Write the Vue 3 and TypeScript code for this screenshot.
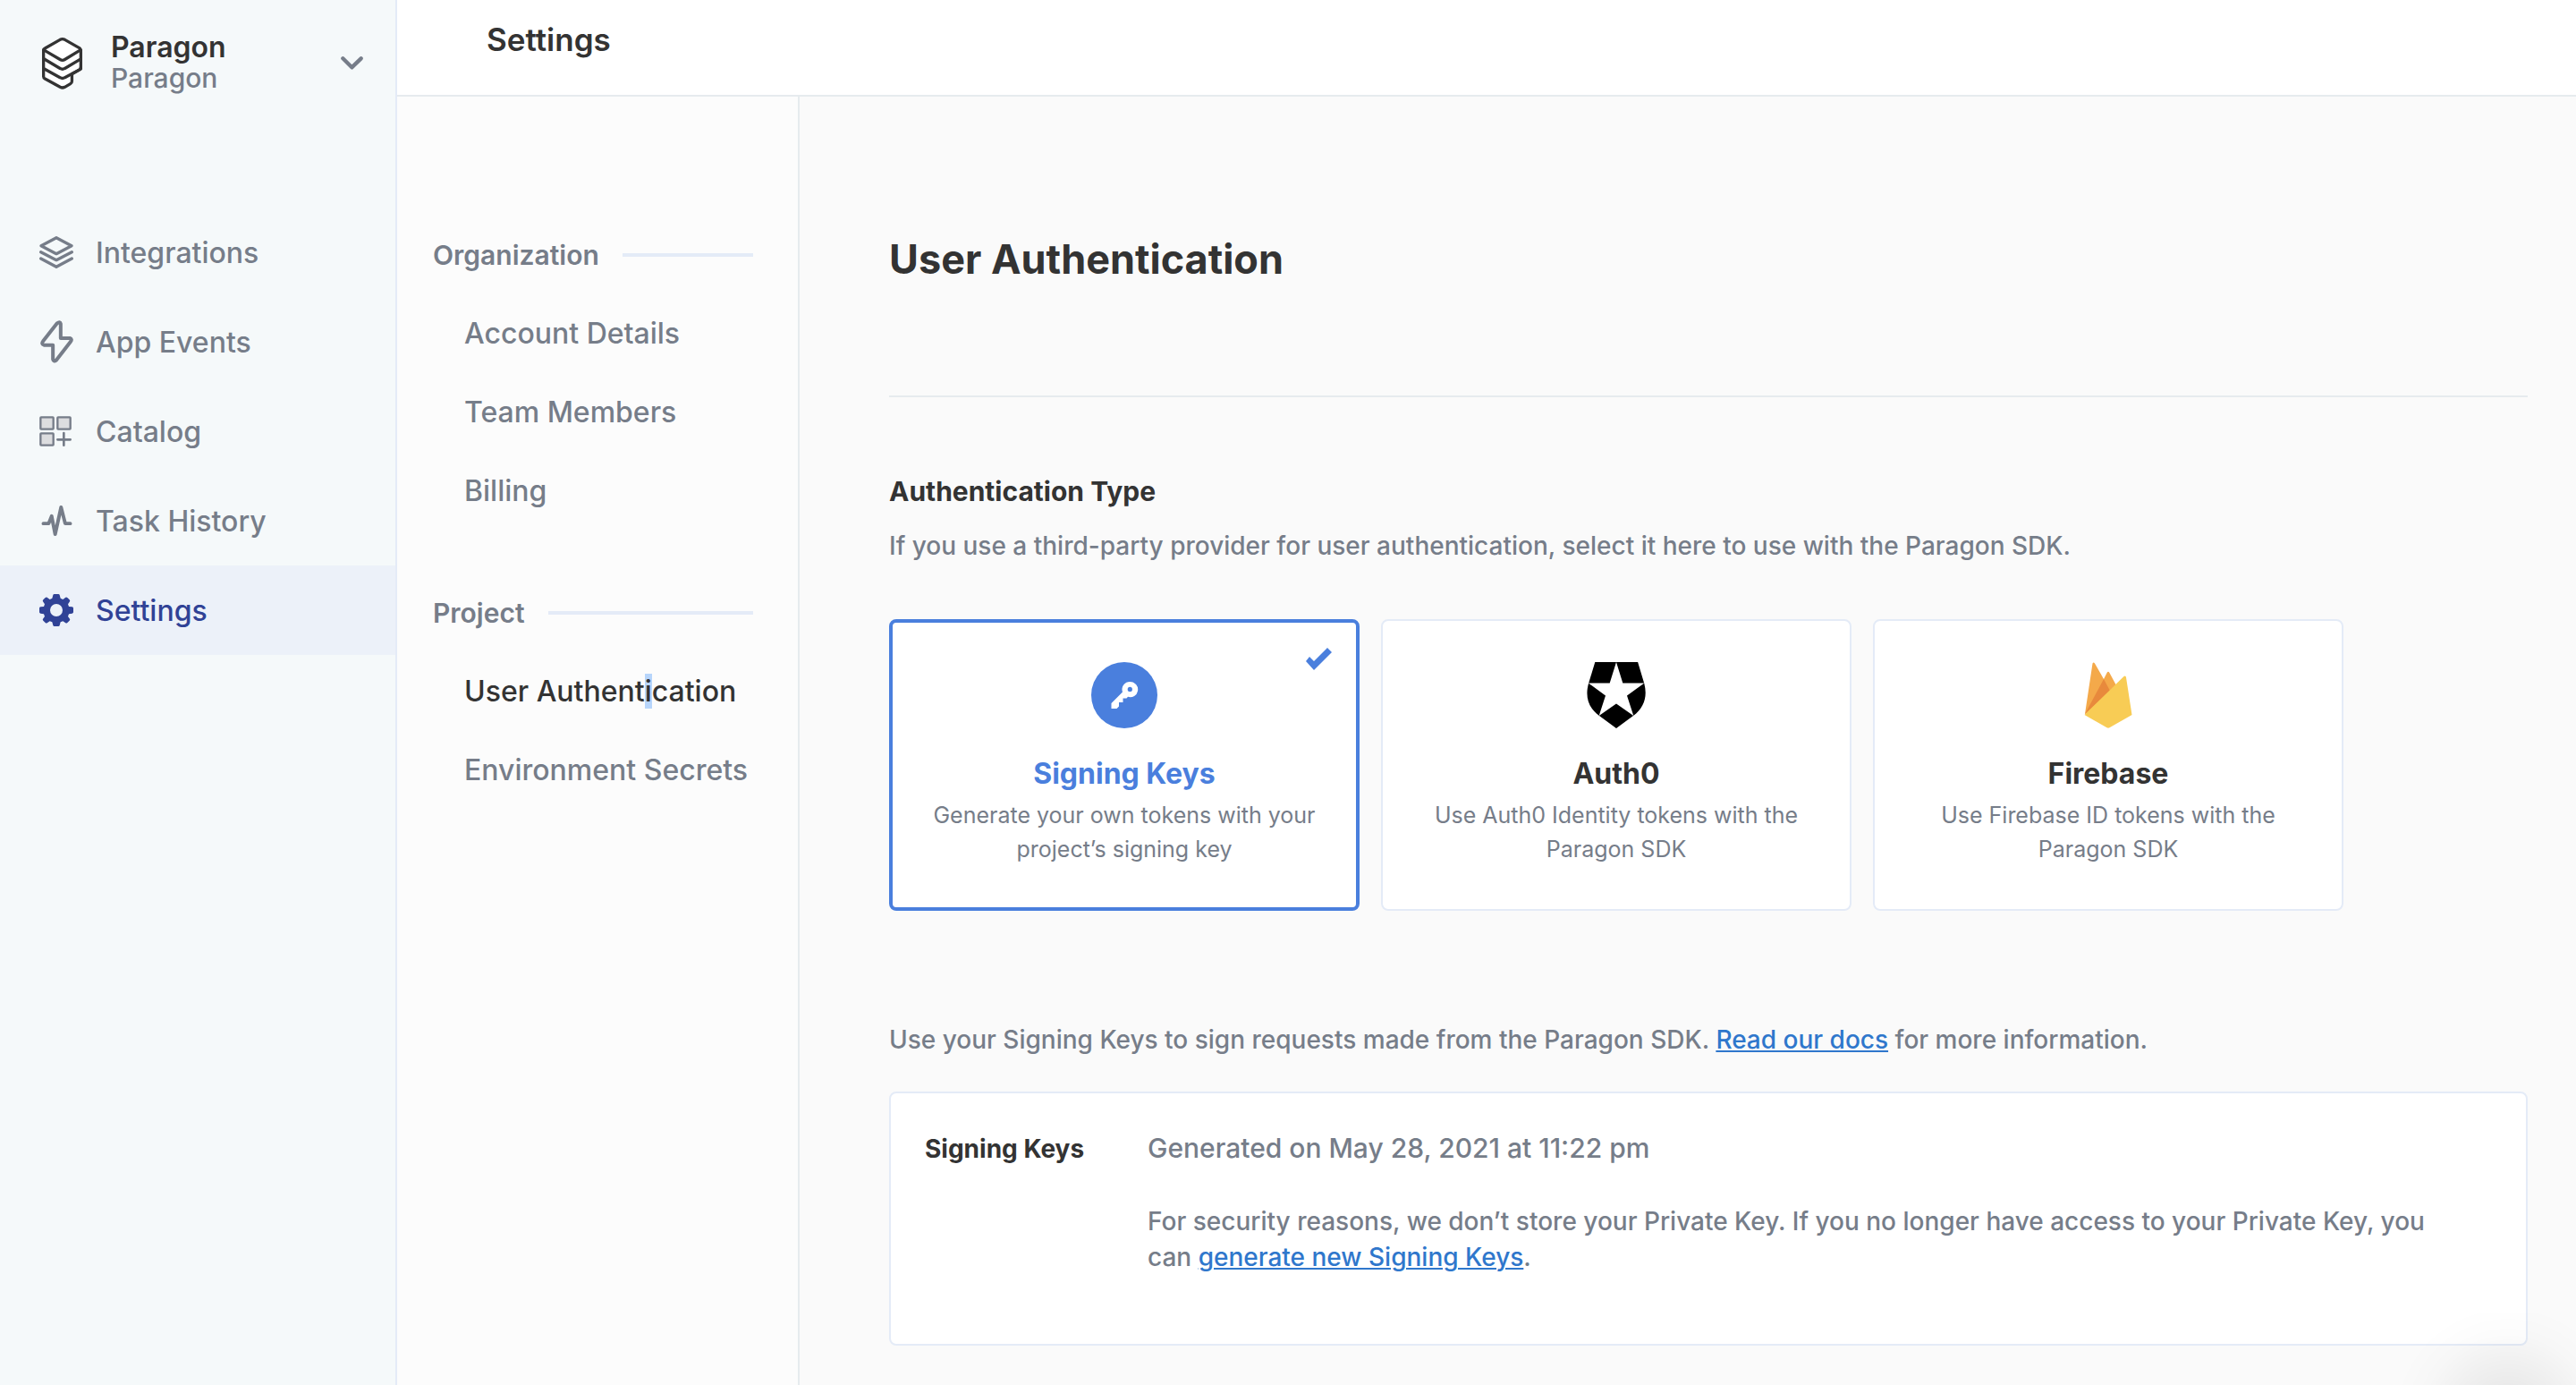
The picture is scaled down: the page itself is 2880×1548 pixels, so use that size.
<script setup lang="ts">
import { ref } from 'vue'

type NavIcon = 'layers' | 'bolt' | 'grid' | 'pulse' | 'gear'

interface NavItem {
  label: string
  icon: NavIcon
}

interface SettingsGroup {
  title: string
  items: string[]
}

interface AuthOption {
  id: 'keys' | 'auth0' | 'firebase'
  title: string
  description: string
}

const navItems: NavItem[] = [
  { label: 'Integrations', icon: 'layers' },
  { label: 'App Events', icon: 'bolt' },
  { label: 'Catalog', icon: 'grid' },
  { label: 'Task History', icon: 'pulse' },
  { label: 'Settings', icon: 'gear' },
]

const groups: SettingsGroup[] = [
  { title: 'Organization', items: ['Account Details', 'Team Members', 'Billing'] },
  { title: 'Project', items: ['User Authentication', 'Environment Secrets'] },
]

const authOptions: AuthOption[] = [
  { id: 'keys', title: 'Signing Keys', description: 'Generate your own tokens with your project’s signing key' },
  { id: 'auth0', title: 'Auth0', description: 'Use Auth0 Identity tokens with the Paragon SDK' },
  { id: 'firebase', title: 'Firebase', description: 'Use Firebase ID tokens with the Paragon SDK' },
]

const activeNav = ref('Settings')
const activePage = ref('User Authentication')
const authType = ref<AuthOption['id']>('keys')
</script>

<template>
  <div class="app">
    <aside class="sidebar">
      <button class="switcher" type="button">
        <svg class="logo" viewBox="0 0 142 178" fill="#fff" stroke="#333" stroke-width="10" stroke-linejoin="round" stroke-linecap="round">
          <path d="M8 44V134Q8 139 13 142L64 170Q72 174 80 170L99 159Q104 156 104 150V126L134 109V44Z" />
          <path d="M8 74L64 107Q72 112 80 107L134 75" fill="none" />
          <path d="M8 107L64 138Q72 143 80 138L128 112Q134 109 134 103" fill="none" />
          <path d="M13 39L64 10Q72 6 80 10L129 38Q135 43 129 47L80 77Q72 82 64 77L13 47Q5 43 13 39Z" />
        </svg>
        <span class="switcher-text">
          <span class="org-name">Paragon</span>
          <span class="project-name">Paragon</span>
        </span>
        <svg class="chevron" viewBox="0 0 75 45" fill="none" stroke="#767d89" stroke-width="13" stroke-linecap="round" stroke-linejoin="round">
          <path d="M7 7L37 37L68 7" />
        </svg>
      </button>

      <nav class="main-nav">
        <a
          v-for="item in navItems"
          :key="item.label"
          href="#"
          class="nav-link"
          :class="{ active: item.label === activeNav }"
          @click.prevent="activeNav = item.label"
        >
          <span class="nav-icon">
            <svg v-if="item.icon === 'layers'" width="38" height="36" viewBox="0 0 114 108" fill="none" stroke="currentColor" stroke-width="10" stroke-linejoin="round" stroke-linecap="round">
              <path d="M57 5L108 32L57 59L6 32Z" />
              <path d="M5 53L57 80L109 53" />
              <path d="M5 75L57 103L109 75" />
            </svg>
            <svg v-else-if="item.icon === 'bolt'" width="37" height="48" viewBox="0 0 110 144" fill="none" stroke="currentColor" stroke-width="12" stroke-linejoin="round">
              <path d="M56 10Q66 2 68 12V60H99Q108 63 101 72L54 133Q44 141 42 131V83H12Q2 80 9 70Z" />
            </svg>
            <svg v-else-if="item.icon === 'grid'" class="icon-grid" width="36" height="34" viewBox="0 0 108 102" fill="#dcdddf" stroke="currentColor" stroke-width="7">
              <rect x="4" y="4" width="43" height="40" rx="2" />
              <rect x="61" y="4" width="43" height="40" rx="2" />
              <rect x="4" y="58" width="43" height="40" rx="2" />
              <path d="M82 57V98M61 79H104" stroke-width="8" stroke-linecap="round" />
            </svg>
            <svg v-else-if="item.icon === 'pulse'" width="35" height="34" viewBox="0 0 103 103" fill="none" stroke="currentColor" stroke-width="12" stroke-linejoin="round" stroke-linecap="round">
              <path d="M6 61H24L34 36L46 97L66 6L80 61H97" />
            </svg>
            <svg v-else width="38" height="36" viewBox="0 0 114 108" fill="currentColor">
              <path
                fill-rule="evenodd"
                d="M46 3Q47 0 50 0H64Q67 0 68 3L71 14L79 18L88 11Q91 9 94 12L101 19Q104 22 102 25L96 34L99 42L110 43Q114 44 114 47V61Q114 64 110 65L99 67L96 75L102 83Q104 86 101 89L94 96Q91 99 88 97L79 91L71 94L68 105Q67 108 64 108H50Q47 108 46 105L43 94L35 91L26 97Q23 99 20 96L13 89Q10 86 12 83L18 75L15 67L4 65Q0 64 0 61V47Q0 44 4 43L15 42L18 34L12 25Q10 22 13 19L20 12Q23 9 26 11L35 18L43 14ZM57 33A21 21 0 1 0 57 75A21 21 0 1 0 57 33Z"
              />
            </svg>
          </span>
          {{ item.label }}
        </a>
      </nav>
    </aside>

    <div class="workspace">
      <header class="topbar">
        <h1 class="topbar-title">Settings</h1>
      </header>

      <div class="body">
        <nav class="settings-nav">
          <section v-for="group in groups" :key="group.title" class="group">
            <h2 class="group-title">{{ group.title }}</h2>
            <a
              v-for="page in group.items"
              :key="page"
              href="#"
              class="page-link"
              :class="{ active: page === activePage }"
              @click.prevent="activePage = page"
            >
              <template v-if="page === 'User Authentication'">User Authent<mark>i</mark>cation</template>
              <template v-else>{{ page }}</template>
            </a>
          </section>
        </nav>

        <main class="content">
          <h2 class="page-title">User Authentication</h2>
          <hr class="divider" />

          <h3 id="auth-type" class="section-title">Authentication Type</h3>
          <p class="copy">If you use a third-party provider for user authentication, select it here to use with the Paragon SDK.</p>

          <div class="cards" role="radiogroup" aria-labelledby="auth-type">
            <label
              v-for="option in authOptions"
              :key="option.id"
              class="card"
              :class="{ selected: option.id === authType }"
              :for="`auth-${option.id}`"
            >
              <input :id="`auth-${option.id}`" v-model="authType" class="card-input" type="radio" name="auth-type" :value="option.id" />
              <svg v-if="option.id === authType" class="card-check" viewBox="0 0 29 25" fill="#4a7fdd">
                <path d="M0 15L4 10L9 15L24 0L29 5L9 25Z" />
              </svg>

              <svg v-if="option.id === 'keys'" class="card-icon" viewBox="0 0 74 74">
                <circle cx="37" cy="37" r="37" fill="#4a7fdd" />
                <path
                  fill="#fff"
                  fill-rule="evenodd"
                  d="M43.500 22A8.600 8.600 0 1 1 41 38.800L39.500 40.500H35.500V45H31V49.500L28.500 52H22.500V46L35 33.500A8.600 8.600 0 0 1 43.500 22ZM43.300 27.800A2.600 2.600 0 1 0 43.300 33A2.600 2.600 0 1 0 43.300 27.800Z"
                />
              </svg>
              <svg v-else-if="option.id === 'auth0'" class="card-icon" viewBox="0 0 66 74">
                <path d="M9.300 0H57.100L64.300 24C68 38 64.500 51 52 60L33 74L14 60C1.500 51 -2 38 2 24Z" fill="#000" />
                <path d="M33 0L40.300 23.400H64.300L45 37.400L52.300 60L33 46.400L13.700 60L21 37.400L1.700 23.400H25.700Z" fill="#fff" />
              </svg>
              <svg v-else class="card-icon" viewBox="0 0 54 74">
                <path d="M1 58L9.500 1.500Q10.500 -0.500 12 1.500L22 19L25.700 11.800Q27 9.800 28.300 11.800L36 26L20 52Z" fill="#f4a94a" />
                <path d="M1 58L22 19L29 32Z" fill="#e8893c" />
                <path d="M0.500 59L44.500 16Q46.500 14.500 47 17L53.500 59L28.500 73.300Q27 74 25.500 73.300Z" fill="#f8cc55" />
              </svg>

              <span class="card-title">{{ option.title }}</span>
              <span class="card-text">{{ option.description }}</span>
            </label>
          </div>

          <p class="copy note">
            Use your Signing Keys to sign requests made from the Paragon SDK. <a href="#" class="link">Read our docs</a> for more information.
          </p>

          <section class="panel">
            <h3 class="panel-title">Signing Keys</h3>
            <div class="panel-body">
              <p class="generated">Generated on May 28, 2021 at 11:22 pm</p>
              <p class="copy">
                For security reasons, we don’t store your Private Key. If you no longer have access to your Private Key, you can
                <a href="#" class="link">generate new Signing Keys</a>.
              </p>
            </div>
          </section>
        </main>
      </div>
    </div>

    <div class="launcher-shadow" aria-hidden="true"></div>
  </div>
</template>

<style>
body {
  margin: 0;
  background: #fafafa;
}
</style>

<style scoped>
.app {
  display: flex;
  min-height: 100vh;
  font-family: Inter, 'Liberation Sans', sans-serif;
  font-weight: 500;
  color: #767d89;
}

h1,
h2,
h3,
p {
  margin: 0;
}

a {
  color: inherit;
  text-decoration: none;
}

.sidebar {
  flex: none;
  box-sizing: border-box;
  width: 444px;
  background: #f5f9fa;
  border-right: 2px solid #e4ebf7;
}

.switcher {
  display: flex;
  align-items: center;
  width: 100%;
  height: 140px;
  padding: 0 36px 0 46px;
  border: 0;
  background: none;
  font: inherit;
  color: inherit;
  text-align: left;
}

.logo {
  width: 47px;
  height: 59px;
}

.switcher-text {
  display: flex;
  flex: 1;
  flex-direction: column;
  padding-left: 31px;
  line-height: 35px;
}

.org-name {
  font-size: 32px;
  font-weight: 600;
  color: #333;
}

.project-name {
  font-size: 30px;
}

.chevron {
  width: 25px;
  height: 15px;
}

.main-nav {
  padding-top: 92px;
}

.nav-link {
  display: flex;
  align-items: center;
  gap: 25px;
  height: 100px;
  padding-left: 44px;
  font-size: 32px;
}

.nav-link.active {
  background: #ecf1f9;
  color: #304296;
}

.nav-icon {
  display: flex;
  justify-content: center;
  width: 38px;
}

.icon-grid {
  margin-right: 2px;
}

.workspace {
  display: flex;
  flex: 1;
  flex-direction: column;
  min-width: 0;
}

.topbar {
  box-sizing: border-box;
  height: 108px;
  padding: 22px 100px 0;
  background: #fff;
  border-bottom: 2px solid #e6ebee;
}

.topbar-title {
  font-size: 35px;
  line-height: 44px;
  font-weight: 600;
  color: #333;
}

.body {
  display: flex;
  flex: 1;
}

.settings-nav {
  flex: none;
  box-sizing: border-box;
  width: 450px;
  padding: 157px 50px 0 40px;
  background: #fcfcfc;
  border-right: 2px solid #e6ebee;
}

.group {
  display: flex;
  flex-direction: column;
  gap: 48px;
  margin-bottom: 96px;
}

.group-title {
  display: flex;
  align-items: center;
  gap: 26px;
  font-size: 30px;
  line-height: 40px;
  font-weight: 600;
}

.group-title::after {
  content: '';
  flex: 1;
  height: 4px;
  background: #e4ebf7;
}

.page-link {
  padding-left: 35px;
  font-size: 32px;
  line-height: 40px;
  white-space: nowrap;
}

.page-link.active {
  color: #333;
}

mark {
  background: #b7d5fb;
  color: inherit;
}

.content {
  flex: 1;
  min-width: 0;
  padding: 154px 54px 44px 100px;
  background: #fafafa;
}

.page-title {
  font-size: 45px;
  line-height: 56px;
  font-weight: 700;
  color: #333;
}

.divider {
  height: 2px;
  margin: 124px 0 85px;
  border: 0;
  background: #e6ebee;
}

.section-title {
  margin-bottom: 21px;
  font-size: 30px;
  line-height: 40px;
  font-weight: 700;
  color: #333;
}

.copy {
  font-size: 28px;
  line-height: 40px;
}

.cards {
  display: flex;
  gap: 24px;
  margin-top: 62px;
}

.card {
  position: relative;
  display: flex;
  flex-direction: column;
  align-items: center;
  box-sizing: border-box;
  width: 526px;
  padding: 46px 40px 48px;
  background: #fff;
  border: 2px solid #e4ebf7;
  border-radius: 8px;
  text-align: center;
}

.card.selected {
  padding: 44px 38px 46px;
  border: 4px solid #4a7fdd;
}

.card-input {
  position: absolute;
  opacity: 0;
}

.card-check {
  position: absolute;
  top: 28px;
  right: 27px;
  width: 29px;
  height: 25px;
}

.card-icon {
  height: 74px;
}

.card-title {
  margin-top: 31px;
  font-size: 32px;
  line-height: 40px;
  font-weight: 700;
  color: #333;
}

.selected .card-title {
  color: #4a7fdd;
}

.card-text {
  margin-top: 7px;
  font-size: 25px;
  line-height: 38px;
  font-weight: 400;
}

.note {
  margin-top: 124px;
}

.link {
  color: #2f77cc;
  text-decoration: underline;
  text-decoration-thickness: 2px;
  text-underline-offset: 2px;
}

.panel {
  display: flex;
  align-items: baseline;
  margin-top: 38px;
  padding: 41px 80px 77px 38px;
  background: #fff;
  border: 2px solid #e4ebf7;
  border-radius: 8px;
}

.panel-title {
  flex: none;
  width: 249px;
  font-size: 28px;
  line-height: 40px;
  font-weight: 700;
  color: #333;
}

.panel-body {
  flex: 1;
}

.generated {
  margin-bottom: 42px;
  font-size: 30px;
  line-height: 40px;
}

.launcher-shadow {
  position: fixed;
  right: 0;
  bottom: 0;
  width: 200px;
  height: 80px;
  background: radial-gradient(circle 130px at 124px 120px, rgba(0, 0, 0, 0.1), rgba(0, 0, 0, 0.05) 40%, rgba(0, 0, 0, 0.01) 75%, transparent);
  pointer-events: none;
}
</style>
